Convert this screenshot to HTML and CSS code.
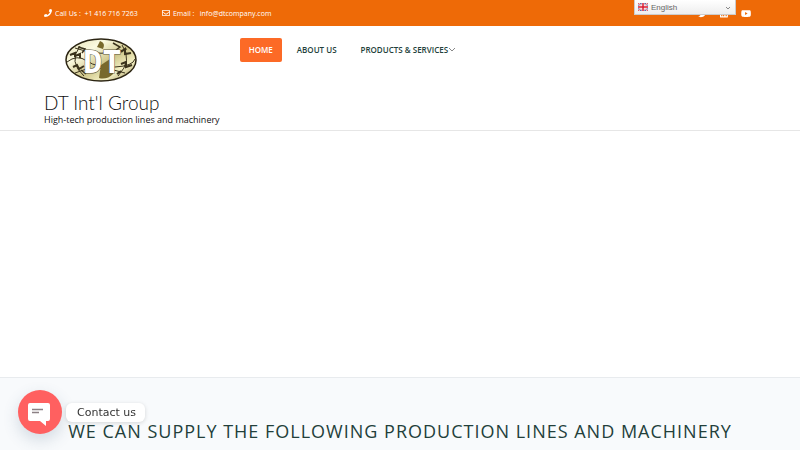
FILE: index.html
```
<!DOCTYPE html>
<html lang="en">
  <head>
    <meta charset="UTF-8" />
    <meta name="viewport" content="width=device-width, initial-scale=1" />
    <title>DT Int'l Group</title>
    <link rel="stylesheet" href="styles.css">
  </head>
  <body>
    <div class="top-bar">
      <div class="container top-bar-inner">
        <div class="contact-list">
          <a href="tel:+14167167263">
            <svg class="icon" viewBox="0 0 512 512"><path d="M493 25L389 1c-11-3-23 3-27 14l-48 112c-4 10-1 21 7 28l61 50c-36 76-99 140-177 177l-50-61c-7-8-18-11-28-7L15 362c-11 4-17 16-14 27l24 104c2 11 12 19 23 19 256 0 464-207 464-464 0-11-8-21-19-23z"/></svg>
            <span>Call Us :&nbsp; +1 416 716 7263</span>
          </a>
          <a href="mailto:info@dtcompany.com">
            <svg class="icon" viewBox="0 0 512 512"><path d="M464 64H48C21 64 0 85 0 112v288c0 27 21 48 48 48h416c27 0 48-21 48-48V112c0-27-21-48-48-48zm0 48v41c-22 18-58 47-134 106-17 13-50 45-74 45s-57-32-74-45C106 200 70 171 48 153v-41zM48 400V215c23 18 55 43 104 82 22 17 61 55 104 55s81-37 104-55c49-39 81-64 104-82v185z"/></svg>
            <span>Email :&nbsp;&nbsp; info@dtcompany.com</span>
          </a>
        </div>
        <div class="social">
          <a href="#" aria-label="Twitter">
            <svg viewBox="0 0 512 512"><path d="M459 152c0 4 0 9 0 14 0 138-105 298-298 298-59 0-114-17-161-47 8 1 16 1 25 1 49 0 94-17 130-45-46-1-85-31-98-73 7 1 13 2 20 2 9 0 19-1 28-4-48-9-84-52-84-103v-1c14 8 30 13 47 13-28-19-47-51-47-87 0-19 5-37 14-53 52 64 129 105 216 110-2-8-3-16-3-24 0-58 47-105 105-105 30 0 58 13 77 33 24-5 46-13 66-25-8 24-24 45-46 58 21-2 42-8 60-16-14 21-31 39-51 54z"/></svg>
          </a>
          <a href="#" aria-label="LinkedIn">
            <svg viewBox="0 0 448 512"><path d="M416 32H32C14 32 0 47 0 64v384c0 18 14 32 32 32h384c18 0 32-14 32-32V64c0-17-14-32-32-32zM135 416H69V202h66zM102 173a38 38 0 1 1 0-77 38 38 0 0 1 0 77zm282 243h-66V312c0-25-1-57-35-57s-40 27-40 55v106h-66V202h64v29h1c9-17 30-34 63-34 67 0 79 44 79 102z"/></svg>
          </a>
          <a href="#" aria-label="YouTube">
            <svg viewBox="0 0 576 512"><path d="M550 124c-7-24-25-42-49-49-42-11-213-11-213-11S117 64 75 75c-24 7-42 25-49 49-11 43-11 132-11 132s0 90 11 133c7 23 25 41 49 48 42 11 213 11 213 11s171 0 213-11c24-7 42-25 49-48 11-43 11-133 11-133s0-89-11-132zM232 338V175l143 81z"/></svg>
          </a>
        </div>
      </div>
    </div>

    <header class="header">
      <div class="container header-inner">
        <div class="brand">
          <a class="logo" href="#" aria-label="DT Int'l Group">
            <svg viewBox="0 0 72 44">
              <defs>
                <linearGradient id="gold" x1="0" y1="0" x2="1" y2="1">
                  <stop offset="0" stop-color="#e4deb0" />
                  <stop offset="0.3" stop-color="#fbfae0" />
                  <stop offset="0.55" stop-color="#cfc68a" />
                  <stop offset="0.75" stop-color="#f4f0c4" />
                  <stop offset="1" stop-color="#8c7c44" />
                </linearGradient>
              </defs>
              <ellipse cx="36" cy="22" rx="35" ry="21" fill="url(#gold)" stroke="#2b2412" stroke-width="1.5" />
              <g fill="none" stroke="#3b331c">
                <path d="M15 8Q3 24 19 38M57 7Q68 22 53 38M2 24Q12 16 22 23T50 29T70 21M10 10Q36 20 62 11M10 35Q30 25 60 35" />
                <path d="M5 17l5-2v3l5-2v4M8 29l4-2 2 4 5-3M56 14l4-3v5l6-1M56 26l5-2v5l6-2M52 36l4-3" stroke-width="2" />
                <path d="M13 9l7 2-3 4M21 36l-5-4M48 5l7 4-4 3" stroke-width="1.5" />
              </g>
              <path d="M36 27l12-8v17q-6 6-14 4zM35 3q6 2 3 8l-6-2z" fill="#78692c" />
              <text class="logo-text" x="18" y="35">DT</text>
            </svg>
          </a>
          <h1 class="site-title">DT Int'l Group</h1>
          <p class="tagline">High-tech production lines and machinery</p>
        </div>
        <nav class="menu">
          <a class="active" href="#">Home</a>
          <a href="#">About Us</a>
          <a href="#">Products &amp; Services<svg class="caret" viewBox="0 0 8 6"><path d="M1 1l3 3 3-3" /></svg></a>
        </nav>
      </div>
    </header>

    <main>
      <section class="slider"></section>
      <section class="services">
        <h2>We can supply the following production lines and machinery</h2>
      </section>
    </main>

    <div class="language">
      <svg class="flag" viewBox="0 0 20 16">
        <rect width="20" height="16" fill="#27368b" />
        <path d="M0 0l20 16M20 0L0 16" stroke="#fff" stroke-width="4" />
        <path d="M0 0l20 16M20 0L0 16" stroke="#d8192f" stroke-width="1.5" />
        <path d="M10 0v16M0 8h20" stroke="#fff" stroke-width="6" />
        <path d="M10 0v16M0 8h20" stroke="#d8192f" stroke-width="3" />
      </svg>
      <select aria-label="Language">
        <option>English</option>
      </select>
      <svg class="caret" viewBox="0 0 8 6"><path d="M2 2l2 2 2-2" /></svg>
    </div>

    <div class="chat">
      <button class="chat-button" aria-label="Open chat">
        <svg viewBox="0 0 44 44">
          <path d="M12 13h18q2 0 2 2v14q0 2-2 2h-2v5l-6-5H12q-2 0-2-2V15q0-2 2-2z" fill="#fff" />
          <path d="M14 19.500h11M14 22.500h7" stroke="#8c8084" stroke-width="1.300" />
        </svg>
      </button>
      <span class="chat-label">Contact us</span>
    </div>
  </body>
</html>
```

FILE: styles.css
```
* {
  box-sizing: border-box;
}

body {
  margin: 0;
  font-family: "Open Sans", sans-serif;
  color: #111;
  background: #fff;
}

a {
  color: inherit;
  text-decoration: none;
}

.container {
  width: 89%;
  margin: 0 auto;
}

/* top bar */
.top-bar {
  background: #ee6a07;
  color: #fff;
  font-size: 7px;
}

.top-bar-inner {
  display: flex;
  justify-content: space-between;
  align-items: center;
  min-height: 26px;
}

.contact-list {
  display: flex;
  gap: 24px;
}

.contact-list a {
  display: flex;
  align-items: center;
  gap: 3px;
}

.icon {
  width: 8px;
  height: 8px;
  fill: currentColor;
}

.social {
  display: flex;
  gap: 13px;
  padding-right: 5px;
}

.social a {
  display: flex;
}

.social svg {
  height: 9px;
  fill: currentColor;
}

/* header */
.header {
  border-bottom: 1px solid #e6e6e6;
}

.header-inner {
  display: flex;
  align-items: flex-start;
  gap: 20px;
  padding: 12px 0 5px;
}

.logo {
  display: block;
  margin-left: 21px;
}

.logo svg {
  display: block;
  width: 72px;
  height: 44px;
}

.logo-text {
  font-family: "DejaVu Sans Mono", monospace;
  font-weight: bold;
  font-size: 32px;
  fill: #fff;
  stroke: #5d553c;
  stroke-width: 1px;
  paint-order: stroke;
}

.site-title {
  margin: 9px 0 0;
  font-family: Lato, sans-serif;
  font-weight: 300;
  font-size: 19px;
  line-height: 24px;
}

.tagline {
  margin: 0;
  font-size: 9px;
  line-height: 10px;
}

.menu {
  display: flex;
  gap: 6px;
}

.menu a {
  padding: 0 9px;
  border-radius: 2px;
  font-size: 8px;
  font-weight: 600;
  line-height: 24px;
  text-transform: uppercase;
  color: #233f3b;
}

.menu .active {
  background: #fc6a26;
  color: #fff;
}

.caret {
  width: 8px;
  height: 6px;
  fill: none;
  stroke: #888;
}

/* content */
.slider {
  height: 246px;
}

.services {
  padding: 38px 20px 48px;
  border-top: 1px solid #e8ebee;
  background: #f8fafc;
  text-align: center;
}

.services h2 {
  margin: 0;
  font-size: 18px;
  font-weight: 400;
  line-height: 30px;
  letter-spacing: 1px;
  text-transform: uppercase;
  color: #233f3b;
}

/* language switcher */
.language {
  position: fixed;
  top: 0;
  right: 8%;
  width: 102px;
}

.language select {
  display: block;
  width: 100%;
  height: 15px;
  padding: 0 16px;
  border: 1px solid #ccc;
  border-top: 0;
  border-radius: 0;
  appearance: none;
  background: linear-gradient(#fff, #eee);
  font-family: "Liberation Sans", sans-serif;
  font-size: 8px;
  color: #666;
}

.language .flag {
  position: absolute;
  top: 3px;
  left: 4px;
  width: 10px;
  height: 8px;
}

.language .caret {
  position: absolute;
  top: 5px;
  right: 4px;
}

/* chat widget */
.chat {
  position: fixed;
  left: 18px;
  bottom: 16px;
  display: flex;
  align-items: center;
  gap: 4px;
}

.chat-button {
  width: 44px;
  height: 44px;
  padding: 0;
  border: 0;
  border-radius: 50%;
  background: #ff6060;
  box-shadow: 0 6px 16px rgba(60, 90, 120, 0.2);
  cursor: pointer;
}

.chat-button svg {
  display: block;
  fill: none;
}

.chat-label {
  padding: 0 9px 0 11px;
  border-radius: 6px;
  background: #fff;
  box-shadow: 0 1px 4px rgba(0, 0, 0, 0.15);
  font-family: "DejaVu Sans", sans-serif;
  font-size: 11px;
  line-height: 19px;
  color: #333;
}
```
